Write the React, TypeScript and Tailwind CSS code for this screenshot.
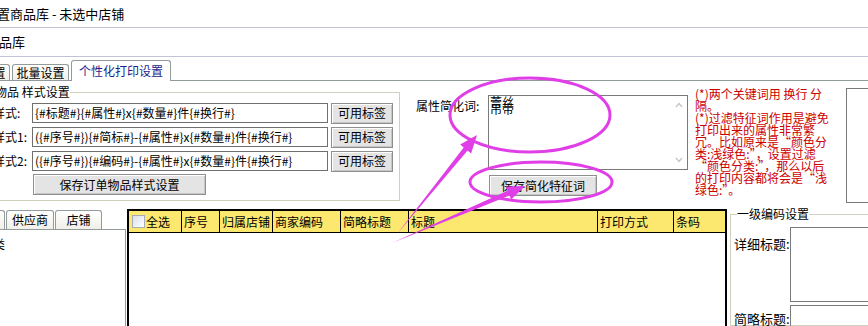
import React from "react";

const font = "font-['Noto_Sans_CJK_SC','Liberation_Sans',sans-serif]";

function WinButton({ label, className = "" }: { label: string; className?: string }) {
    return (
        <button
            className={`flex shrink-0 items-center justify-center whitespace-nowrap border border-[#8e8f8f] bg-[#e4e4e4] text-[12px] leading-none text-black shadow-[inset_1px_1px_0_#fff,inset_-1px_-1px_0_#c6c6c6] ${className}`}
        >
            {label}
        </button>
    );
}

function Tab({ label, className = "", active = false }: { label: string; className?: string; active?: boolean }) {
    return (
        <div
            className={`flex shrink-0 items-center justify-center overflow-hidden whitespace-nowrap rounded-t-[3px] border border-b-0 border-[#919b9c] text-[12px] leading-none ${
                active ? "-mb-px bg-white text-[#1b1f8a]" : "bg-gradient-to-b from-white to-[#f0efe8] text-black"
            } ${className}`}
        >
            {label}
        </div>
    );
}

const styleRows = [
    { label: "样式:", value: "{#标题#}{#属性#}x{#数量#}件{#换行#}" },
    { label: "样式1:", value: "({#序号#}){#简标#}-{#属性#}x{#数量#}件{#换行#}" },
    { label: "样式2:", value: "({#序号#}){#编码#}-{#属性#}x{#数量#}件{#换行#}" },
];

const columns = [
    { label: "序号", w: "w-[38px]" },
    { label: "归属店铺", w: "w-[53px]" },
    { label: "商家编码", w: "w-[68px]" },
    { label: "简略标题", w: "w-[68px]" },
    { label: "标题", w: "w-[189px]" },
    { label: "打印方式", w: "w-[76px]" },
];

const notes = [
    "(*)两个关键词用 换行 分",
    "隔。",
    "(*)过滤特征词作用是避免",
    "打印出来的属性非常繁",
    "冗。比如原来是“颜色分",
    "类:浅绿色:”，设置过滤",
    "“颜色分类:”，那么以后",
    "的打印内容都将会是“浅",
    "绿色:”。",
];

// tapered arrow: thin tail, wider shaft near the head, then the head
function arrowPoints(tx: number, ty: number, px: number, py: number) {
    const dx = px - tx;
    const dy = py - ty;
    const len = Math.hypot(dx, dy);
    const ux = dx / len;
    const uy = dy / len;
    const nx = -uy;
    const ny = ux;
    const L = 18;
    const w = 2.5;
    const hw = 7;
    const bx = px - ux * L;
    const by = py - uy * L;
    const pts = [
        [tx, ty],
        [bx + nx * w, by + ny * w],
        [bx + nx * hw, by + ny * hw],
        [px, py],
        [bx - nx * hw, by - ny * hw],
        [bx - nx * w, by - ny * w],
    ];
    return pts.map((p) => `${p[0].toFixed(1)},${p[1].toFixed(1)}`).join(" ");
}

function Annotations() {
    const c = "#e03ee6";
    return (
        <svg className="pointer-events-none absolute inset-0" width={868} height={326} viewBox="0 0 868 326">
            <ellipse cx={530} cy={115} rx={80} ry={37} fill="none" stroke={c} strokeWidth={3} />
            <ellipse cx={541} cy={182} rx={71} ry={20} fill="none" stroke={c} strokeWidth={3} />
            <polygon points={arrowPoints(397, 234, 477, 135)} fill={c} />
            <polygon points={arrowPoints(392, 243, 525, 186)} fill={c} />
        </svg>
    );
}

export default function App() {
    return (
        <div className={`relative h-[326px] w-[868px] overflow-hidden bg-white text-[12px] leading-[14px] text-black ${font}`}>
            <div className="flex h-[28px] items-center border-b border-[#bfc3d4]">
                <span className="ml-[-16px] whitespace-nowrap text-[13px]">设置商品库 - 未选中店铺</span>
            </div>
            <div className="flex h-[29px] items-center border-b border-[#bfc3d4]">
                <span className="ml-[-14px] whitespace-nowrap text-[13px]">商品库</span>
            </div>

            <div className="flex h-[24px] items-end gap-[2px] border-b border-[#919b9c]">
                <Tab label="基本设置" className="ml-[-47px] h-[16px] w-[57px]" />
                <Tab label="批量设置" className="h-[16px] w-[57px]" />
                <Tab label="个性化打印设置" active className="h-[21px] w-[100px]" />
            </div>

            <div className="flex h-[124px]">
                <fieldset className="ml-[-36px] mt-[5px] h-[115px] w-[436px] shrink-0 border border-[#d0d0bf] px-0">
                    <legend className="ml-[6px] whitespace-nowrap px-0 text-[12px] leading-[12px]">订单物品 样式设置</legend>
                    <div className="flex flex-col gap-[4px] pl-[28px] pt-[5px]">
                        {styleRows.map((r) => (
                            <div key={r.label} className="flex h-[20px] items-center">
                                <span className="w-[39px] shrink-0 whitespace-nowrap">{r.label}</span>
                                <div className="h-[20px] w-[296px] shrink-0 overflow-hidden whitespace-nowrap border border-[#6f6f6f] px-[2px] leading-[18px]">
                                    {r.value}
                                </div>
                                <WinButton label="可用标签" className="ml-[3px] h-[21px] w-[62px]" />
                            </div>
                        ))}
                        <WinButton label="保存订单物品样式设置" className="ml-[40px] mt-[-1px] h-[21px] w-[173px]" />
                    </div>
                </fieldset>

                <div className="w-[292px] shrink-0 pl-[16px] pt-[14px]">
                    <div className="flex">
                        <span className="w-[72px] shrink-0 whitespace-nowrap pt-[4px]">属性简化词:</span>
                        <div className="flex h-[75px] w-[200px] shrink-0 border border-[#7a7a7a]">
                            <div className="flex-1 pl-[1px] pt-[2px] leading-[7px]">
                                蕾丝
                                <br />
                                吊带
                            </div>
                            <div className="flex w-[16px] flex-col items-center justify-between py-[6px] text-[#c4c4c4]">
                                <svg width="8" height="6" viewBox="0 0 8 6">
                                    <path d="M1 5 L4 1.5 L7 5" fill="none" stroke="currentColor" strokeWidth="1.2" />
                                </svg>
                                <svg width="8" height="6" viewBox="0 0 8 6">
                                    <path d="M1 1 L4 4.5 L7 1" fill="none" stroke="currentColor" strokeWidth="1.2" />
                                </svg>
                            </div>
                        </div>
                    </div>
                    <WinButton label="保存简化特征词" className="ml-[73px] mt-[5px] h-[21px] w-[108px]" />
                </div>

                <div className="ml-[3px] w-[148px] shrink-0 whitespace-nowrap pt-[7px] text-[12px] leading-[12px] text-[#cc0000]">
                    {notes.map((n, i) => (
                        <div key={i}>{n}</div>
                    ))}
                </div>

                <div className="ml-[3px] mt-[7px] h-[115px] w-[30px] shrink-0 border border-[#7a7a7a]" />
            </div>

            <div className="flex h-[121px]">
                <div className="flex w-[126px] shrink-0 flex-col">
                    <div className="flex h-[25px] items-end gap-[1px] border-b border-[#919b9c]">
                        <Tab label="分类" className="ml-[-40px] h-[19px] w-[45px]" />
                        <Tab label="供应商" className="h-[19px] w-[48px]" />
                        <Tab label="店铺" className="h-[19px] w-[47px]" />
                    </div>
                    <div className="flex-1 border-r border-[#919b9c] pt-[7px]">
                        <span className="ml-[-19px] whitespace-nowrap">分类</span>
                    </div>
                </div>

                <div className="ml-[1px] mt-[4px] flex w-[600px] shrink-0 flex-col border-2 border-b-0 border-black">
                    <div className="flex h-[22px] border-b border-black bg-[#fde86f]">
                        <div className="flex w-[53px] shrink-0 items-center gap-[1px] border-r border-black pl-[3px]">
                            <span className="h-[13px] w-[13px] shrink-0 border border-[#a4acbc] bg-gradient-to-br from-[#d9dee8] to-white" />
                            <span>全选</span>
                        </div>
                        {columns.map((col) => (
                            <div key={col.label} className={`flex shrink-0 items-center border-r border-black pl-[2px] ${col.w}`}>
                                {col.label}
                            </div>
                        ))}
                        <div className="flex flex-1 items-center pl-[2px]">条码</div>
                    </div>
                    <div className="flex-1 bg-white" />
                </div>

                <fieldset className="ml-[3px] mt-[3px] w-[150px] shrink-0 border border-[#d0d0bf] px-0">
                    <legend className="ml-[6px] whitespace-nowrap px-0 text-[12px] leading-[12px]">一级编码设置</legend>
                    <div className="flex flex-col gap-[3px] pl-[3px] pt-[7px] text-[13px]">
                        <div className="flex">
                            <span className="w-[56px] shrink-0 whitespace-nowrap pt-[10px]">详细标题:</span>
                            <div className="h-[75px] w-[90px] shrink-0 border border-[#7a7a7a]" />
                        </div>
                        <div className="flex">
                            <span className="w-[56px] shrink-0 whitespace-nowrap pt-[7px]">简略标题:</span>
                            <div className="h-[75px] w-[90px] shrink-0 border border-[#7a7a7a]" />
                        </div>
                    </div>
                </fieldset>
            </div>

            <Annotations />
        </div>
    );
}
